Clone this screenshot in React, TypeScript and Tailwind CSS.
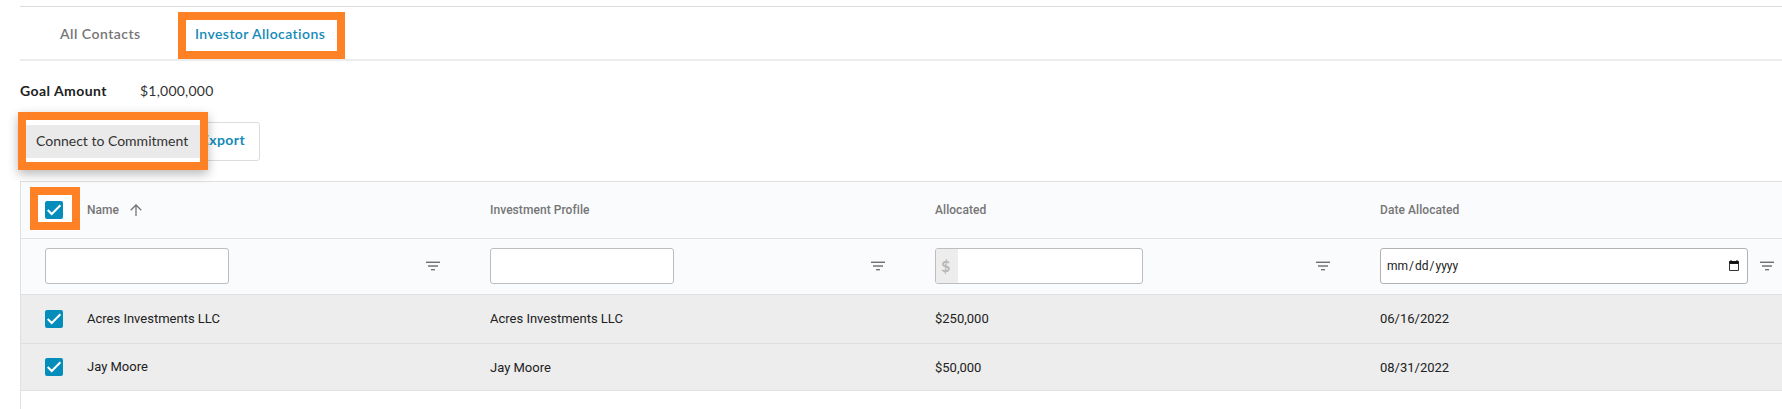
import { useState } from 'react'

interface Allocation {
  id: number
  name: string
  profile: string
  allocated: string
  date: string
}

const allocations: Allocation[] = [
  { id: 1, name: 'Acres Investments LLC', profile: 'Acres Investments LLC', allocated: '$250,000', date: '06/16/2022' },
  { id: 2, name: 'Jay Moore', profile: 'Jay Moore', allocated: '$50,000', date: '08/31/2022' },
]

function Checkbox({ checked, onClick }: { checked: boolean; onClick: () => void }) {
  return (
    <button
      role="checkbox"
      aria-checked={checked}
      onClick={onClick}
      className={`block h-[18px] w-[18px] shrink-0 rounded-[2px] ${checked ? 'bg-[#048dba]' : 'border-2 border-gray-500 bg-white'}`}
    >
      {checked && (
        <svg className="h-[18px] w-[18px]" viewBox="0 0 18 18" fill="none">
          <path d="M2.7 9l4 4L15.4 4.2" stroke="white" strokeWidth="2" />
        </svg>
      )}
    </button>
  )
}

function FilterIcon() {
  return (
    <svg className="h-[10px] w-[14px] shrink-0" viewBox="0 0 14 10" shapeRendering="crispEdges">
      <rect x="0" y="0" width="14" height="1" fill="#bdbfc1" />
      <rect x="0" y="1" width="14" height="1" fill="#6f7072" />
      <rect x="2" y="4" width="10" height="2" fill="#959698" />
      <rect x="5" y="8" width="4" height="1" fill="#757678" />
      <rect x="5" y="9" width="4" height="1" fill="#c6c7c9" />
    </svg>
  )
}

export default function App() {
  const [selected, setSelected] = useState<number[]>([1, 2])
  const allSelected = selected.length === allocations.length

  const toggle = (id: number) => {
    setSelected(prev => prev.includes(id) ? prev.filter(x => x !== id) : [...prev, id])
  }

  const toggleAll = () => {
    setSelected(allSelected ? [] : allocations.map(a => a.id))
  }

  return (
    <div className="h-[409px] overflow-hidden bg-white pt-[6px] pl-5 font-['Lato',sans-serif] text-[14px] text-[#212121]">
      {/* Tabs */}
      <div className="flex h-[55px] items-start border-t border-b-2 border-t-[#dcdcdc] border-b-[#ececec] pt-[5px] pl-10 font-semibold">
        <button className="mt-2 h-[31px] w-[118px] pb-[4px] text-left tracking-[0.48px] whitespace-nowrap text-[#757575]">All Contacts</button>
        <button className="h-[47px] w-[167px] border-8 border-[#ff8126] pb-[4px] pl-[9px] text-left tracking-[0.42px] whitespace-nowrap text-[#148ab8]">
          Investor Allocations
        </button>
      </div>

      {/* Goal */}
      <div className="flex h-[61px] items-center pb-[2px]">
        <span className="w-[120px] font-bold tracking-[0.45px]">Goal Amount</span>
        <span className="tracking-[0.22px] text-[#333]">$1,000,000</span>
      </div>

      {/* Actions */}
      <div className="relative h-[59px]">
        <button className="h-[39px] w-[240px] rounded-[3px] border border-[#dcdcdc] pr-[14px] pb-[4px] text-right font-bold tracking-[0.4px] text-[#148ab8]">Export</button>
        <div className="absolute -top-[10px] -left-[2px] flex h-[58px] w-[190px] items-center border-8 border-[#ff8126] bg-white shadow-[0_4px_10px_rgba(0,0,0,0.28)]">
          <button className="h-[33px] w-full bg-[#eaeaea] pb-[2px] pl-[10px] text-left whitespace-nowrap text-[#333]">Connect to Commitment</button>
        </div>
      </div>

      {/* Allocations grid */}
      <div className="h-[240px] border-t border-l border-[#dee0e2] font-['Roboto',sans-serif] text-[13px]">
        <div className="grid h-[57px] grid-cols-[469px_445px_445px_1fr] items-center border-b border-[#dee0e2] bg-[#fafbfd] text-[12px] font-medium tracking-[0.06px] text-[#757575]">
          <div className="flex items-center pl-[9px]">
            <div className="-mt-[3px] flex h-[43px] w-[50px] items-start border-8 border-[#ff8126] bg-white pt-[6px] pl-[7px]">
              <Checkbox checked={allSelected} onClick={toggleAll} />
            </div>
            <span className="ml-[7px]">Name</span>
            <svg className="ml-[11px] h-3 w-3" viewBox="0 0 12 12" fill="none" stroke="#757575" strokeWidth="1.3">
              <path d="M6 12V1M0.7 6.3L6 1l5.3 5.3" />
            </svg>
          </div>
          <div>Investment Profile</div>
          <div>Allocated</div>
          <div>Date Allocated</div>
        </div>

        <div className="grid h-14 grid-cols-[469px_445px_445px_1fr] items-center border-b border-[#dee0e2] bg-[#fafbfd] pb-[2px]">
          <div className="flex items-center justify-between pr-[50px] pl-6">
            <input className="h-9 w-[184px] rounded-[3px] border border-[#bdbdbd] bg-white px-2" />
            <FilterIcon />
          </div>
          <div className="flex items-center justify-between pr-[50px]">
            <input className="h-9 w-[184px] rounded-[3px] border border-[#bdbdbd] bg-white px-2" />
            <FilterIcon />
          </div>
          <div className="flex items-center justify-between pr-[50px]">
            <div className="flex h-9 w-[208px] overflow-hidden rounded-[3px] border border-[#bdbdbd] bg-white">
              <span className="flex w-[22px] items-center bg-[#ededed] pl-[5px] font-['Lato'] text-[16px] font-bold text-[#b8b8b8]">$</span>
              <input className="min-w-0 flex-1 px-2" />
            </div>
            <FilterIcon />
          </div>
          <div className="flex items-center">
            <div className="flex h-9 w-[368px] items-center justify-between rounded-[3px] border border-[#b2b2b2] bg-white pr-2 pl-[6px]">
              <span className="flex gap-px text-[12px]">
                <span>mm</span>
                <span>/</span>
                <span>dd</span>
                <span>/</span>
                <span>yyyy</span>
              </span>
              <svg className="h-[11px] w-[10px]" viewBox="0 0 10 11" fill="none">
                <path d="M0 2q0-1 1-1h8q1 0 1 1v8q0 1-1 1H1q-1 0-1-1zM1 4v6h8V4z" fill="#333" fillRule="evenodd" />
                <path d="M0.5 1h9v2.7h-9zM1.5 0h1v2h-1zM7.5 0h1v2h-1z" fill="#111" />
              </svg>
            </div>
            <div className="ml-3">
              <FilterIcon />
            </div>
          </div>
        </div>

        {allocations.map((a, i) => (
          <div
            key={a.id}
            className={`grid grid-cols-[469px_445px_445px_1fr] items-center border-b border-[#dee0e2] ${i === 0 ? 'h-[49px]' : 'h-[47px]'} ${selected.includes(a.id) ? 'bg-[#ededed]' : 'bg-white'}`}
          >
            <div className="flex items-center pl-6">
              <Checkbox checked={selected.includes(a.id)} onClick={() => toggle(a.id)} />
              <span className="ml-6">{a.name}</span>
            </div>
            <div className={i === 0 ? '' : 'pt-[2px]'}>{a.profile}</div>
            <div className={i === 0 ? '' : 'pt-[2px]'}>{a.allocated}</div>
            <div className={i === 0 ? '' : 'pt-[2px]'}>{a.date}</div>
          </div>
        ))}
      </div>
    </div>
  )
}
